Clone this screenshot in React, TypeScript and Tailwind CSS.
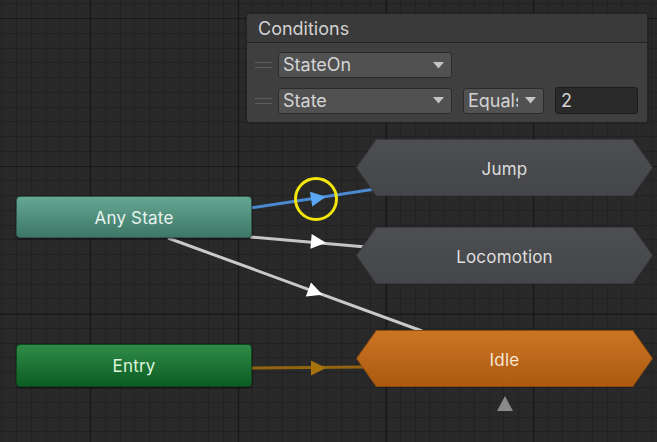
import React from "react";

const W = 657;
const H = 442;

function Grid() {
  const step = 14.76;
  const minorX: number[] = [];
  const minorY: number[] = [];
  for (let i = -10; i < 60; i++) {
    const x = Math.round(90 + i * step);
    if (x >= 0 && x <= W) minorX.push(x);
    const y = Math.round(18 + i * step);
    if (y >= 0 && y <= H) minorY.push(y);
  }
  const majorX = [90, 238, 386, 533];
  const majorY = [18, 166, 314];
  return (
    <svg className="absolute inset-0" width={W} height={H}>
      {minorX.map((x) => (
        <line key={"mx" + x} x1={x + 0.5} y1={0} x2={x + 0.5} y2={H} stroke="#222222" strokeWidth={1} />
      ))}
      {minorY.map((y) => (
        <line key={"my" + y} x1={0} y1={y + 0.5} x2={W} y2={y + 0.5} stroke="#222222" strokeWidth={1} />
      ))}
      {majorX.map((x) => (
        <line key={"Mx" + x} x1={x + 0.5} y1={0} x2={x + 0.5} y2={H} stroke="#181818" strokeWidth={1.2} />
      ))}
      {majorY.map((y) => (
        <line key={"My" + y} x1={0} y1={y + 0.5} x2={W} y2={y + 0.5} stroke="#181818" strokeWidth={1.2} />
      ))}
    </svg>
  );
}

function Arrow({ x, y, angle, fill }: { x: number; y: number; angle: number; fill: string }) {
  return <polygon points="-7,-7.5 8,0 -7,7.5" fill={fill} transform={`translate(${x} ${y}) rotate(${angle})`} />;
}

function Links() {
  return (
    <svg className="absolute inset-0" width={W} height={H}>
      <line x1={250} y1={208} x2={382} y2={188} stroke="#4a8ad0" strokeWidth={3} />
      <line x1={250} y1={237} x2={366} y2={247} stroke="#c6c6c6" strokeWidth={3} />
      <line x1={168} y1={238} x2={422} y2={331} stroke="#c9c9c9" strokeWidth={3} />
      <line x1={250} y1={368} x2={364} y2={367} stroke="#926410" strokeWidth={3} />
    </svg>
  );
}

function Arrows() {
  return (
    <svg className="absolute inset-0 pointer-events-none" width={W} height={H}>
      <Arrow x={318} y={198} angle={-8.9} fill="#5aa6f2" />
      <Arrow x={318} y={242} angle={5} fill="#ffffff" />
      <Arrow x={315} y={292} angle={20.2} fill="#ffffff" />
      <Arrow x={318} y={368} angle={0} fill="#a8730e" />
      <circle cx={316} cy={199} r={20.5} fill="none" stroke="#f3e50c" strokeWidth={3} />
    </svg>
  );
}

function StateNode({
  label,
  top,
  outer,
  inner,
  text,
}: {
  label: string;
  top: string;
  outer: string;
  inner: string;
  text: string;
}) {
  return (
    <div
      className={`absolute left-[356px] w-[297px] h-[57px] ${top} ${outer} [clip-path:polygon(20px_0,calc(100%_-_20px)_0,100%_50%,calc(100%_-_20px)_100%,20px_100%,0_50%)]`}
    >
      <div
        className={`absolute inset-[1px] ${inner} flex items-center justify-center pt-[4px] [clip-path:polygon(19.5px_0,calc(100%_-_19.5px)_0,100%_50%,calc(100%_-_19.5px)_100%,19.5px_100%,0_50%)]`}
      >
        <span className={`text-[17px] tracking-[0.2px] ${text}`}>{label}</span>
      </div>
    </div>
  );
}

function Caret() {
  return (
    <svg width="11" height="7" viewBox="0 0 11 7" className="shrink-0 ml-auto">
      <polygon points="0,0 11,0 5.5,6.5" fill="#c4c4c4" />
    </svg>
  );
}

function Handle() {
  return (
    <div className="w-[17px] flex flex-col gap-[4px] shrink-0">
      <div className="h-px bg-[#5e5e5e]" />
      <div className="h-px bg-[#5e5e5e]" />
    </div>
  );
}

function Dropdown({ label, width, clip }: { label: string; width: string; clip?: string }) {
  return (
    <div
      className={`${width} h-[26px] rounded-[3px] bg-[#515151] border border-[#2b2b2b] flex items-center pl-[4px] pr-[7px] shrink-0`}
    >
      <span className={`flex-1 text-[18px] leading-[24px] text-[#d4d4d4] whitespace-nowrap overflow-hidden ${clip ?? ""}`}>
        {label}
      </span>
      <Caret />
    </div>
  );
}

function Conditions() {
  return (
    <div className="absolute left-[246px] top-[13px] w-[402px] h-[110px] rounded-[3px] border border-[#242424] bg-[#3f3f3f] flex flex-col overflow-hidden shadow-[0_0_2px_rgba(0,0,0,0.5)]">
      <div className="h-[29px] shrink-0 bg-[#3a3a3a] border-b border-[#242424] flex items-center pl-[11px]">
        <span className="text-[18px] text-[#d2d2d2]">Conditions</span>
      </div>
      <div className="flex flex-col gap-[9px] pt-[9px] pl-[8px]">
        <div className="flex items-center gap-[6px]">
          <Handle />
          <Dropdown label="StateOn" width="w-[174px]" />
        </div>
        <div className="flex items-center gap-[11px]">
          <div className="flex items-center gap-[6px]">
            <Handle />
            <Dropdown label="State" width="w-[174px]" />
          </div>
          <Dropdown label="Equals" width="w-[81px]" clip="max-w-[50px]" />
          <div className="w-[83px] h-[27px] rounded-[3px] bg-[#2a2a2a] border border-[#1d1d1d] flex items-center pl-[5px]">
            <span className="text-[18px] leading-[24px] text-[#d4d4d4]">2</span>
          </div>
        </div>
      </div>
    </div>
  );
}

export default function App() {
  return (
    <div className="relative w-[657px] h-[442px] overflow-hidden bg-[#292929] [font-family:Inter,'Liberation_Sans',sans-serif]">
      <Grid />
      <Links />

      {/* Any State */}
      <div className="absolute left-[16px] top-[196px] w-[236px] h-[42px] rounded-[4px] bg-gradient-to-b from-[#64a792] to-[#3e7767] border border-[#2e5a4e] shadow-[0_1px_2px_rgba(0,0,0,0.6)] flex items-center justify-center pt-[3px]">
        <span className="text-[17px] tracking-[0.2px] text-[#e6f3ee]">Any State</span>
      </div>

      {/* Entry */}
      <div className="absolute left-[16px] top-[344px] w-[236px] h-[43px] rounded-[4px] bg-gradient-to-b from-[#2e8c46] to-[#0c5c24] border border-[#0b4a1c] shadow-[0_1px_2px_rgba(0,0,0,0.6)] flex items-center justify-center pt-[3px]">
        <span className="text-[17px] tracking-[0.2px] text-[#dcf5dc]">Entry</span>
      </div>

      <StateNode
        label="Jump"
        top="top-[139px]"
        outer="bg-[#3a3b3e]"
        inner="bg-gradient-to-b from-[#4d4e52] to-[#45464a]"
        text="text-[#dedede]"
      />
      <StateNode
        label="Locomotion"
        top="top-[227px]"
        outer="bg-[#3a3b3e]"
        inner="bg-gradient-to-b from-[#4d4e52] to-[#45464a]"
        text="text-[#dedede]"
      />
      <StateNode
        label="Idle"
        top="top-[330px]"
        outer="bg-[#8a4a10]"
        inner="bg-gradient-to-b from-[#cb7524] to-[#ad5a0f]"
        text="text-[#f6e6d4]"
      />

      {/* small triangle under Idle */}
      <svg className="absolute left-[497px] top-[396px]" width="16" height="15" viewBox="0 0 16 15">
        <polygon points="8,0 16,15 0,15" fill="#8a8a8a" />
      </svg>

      <Arrows />
      <Conditions />
    </div>
  );
}
